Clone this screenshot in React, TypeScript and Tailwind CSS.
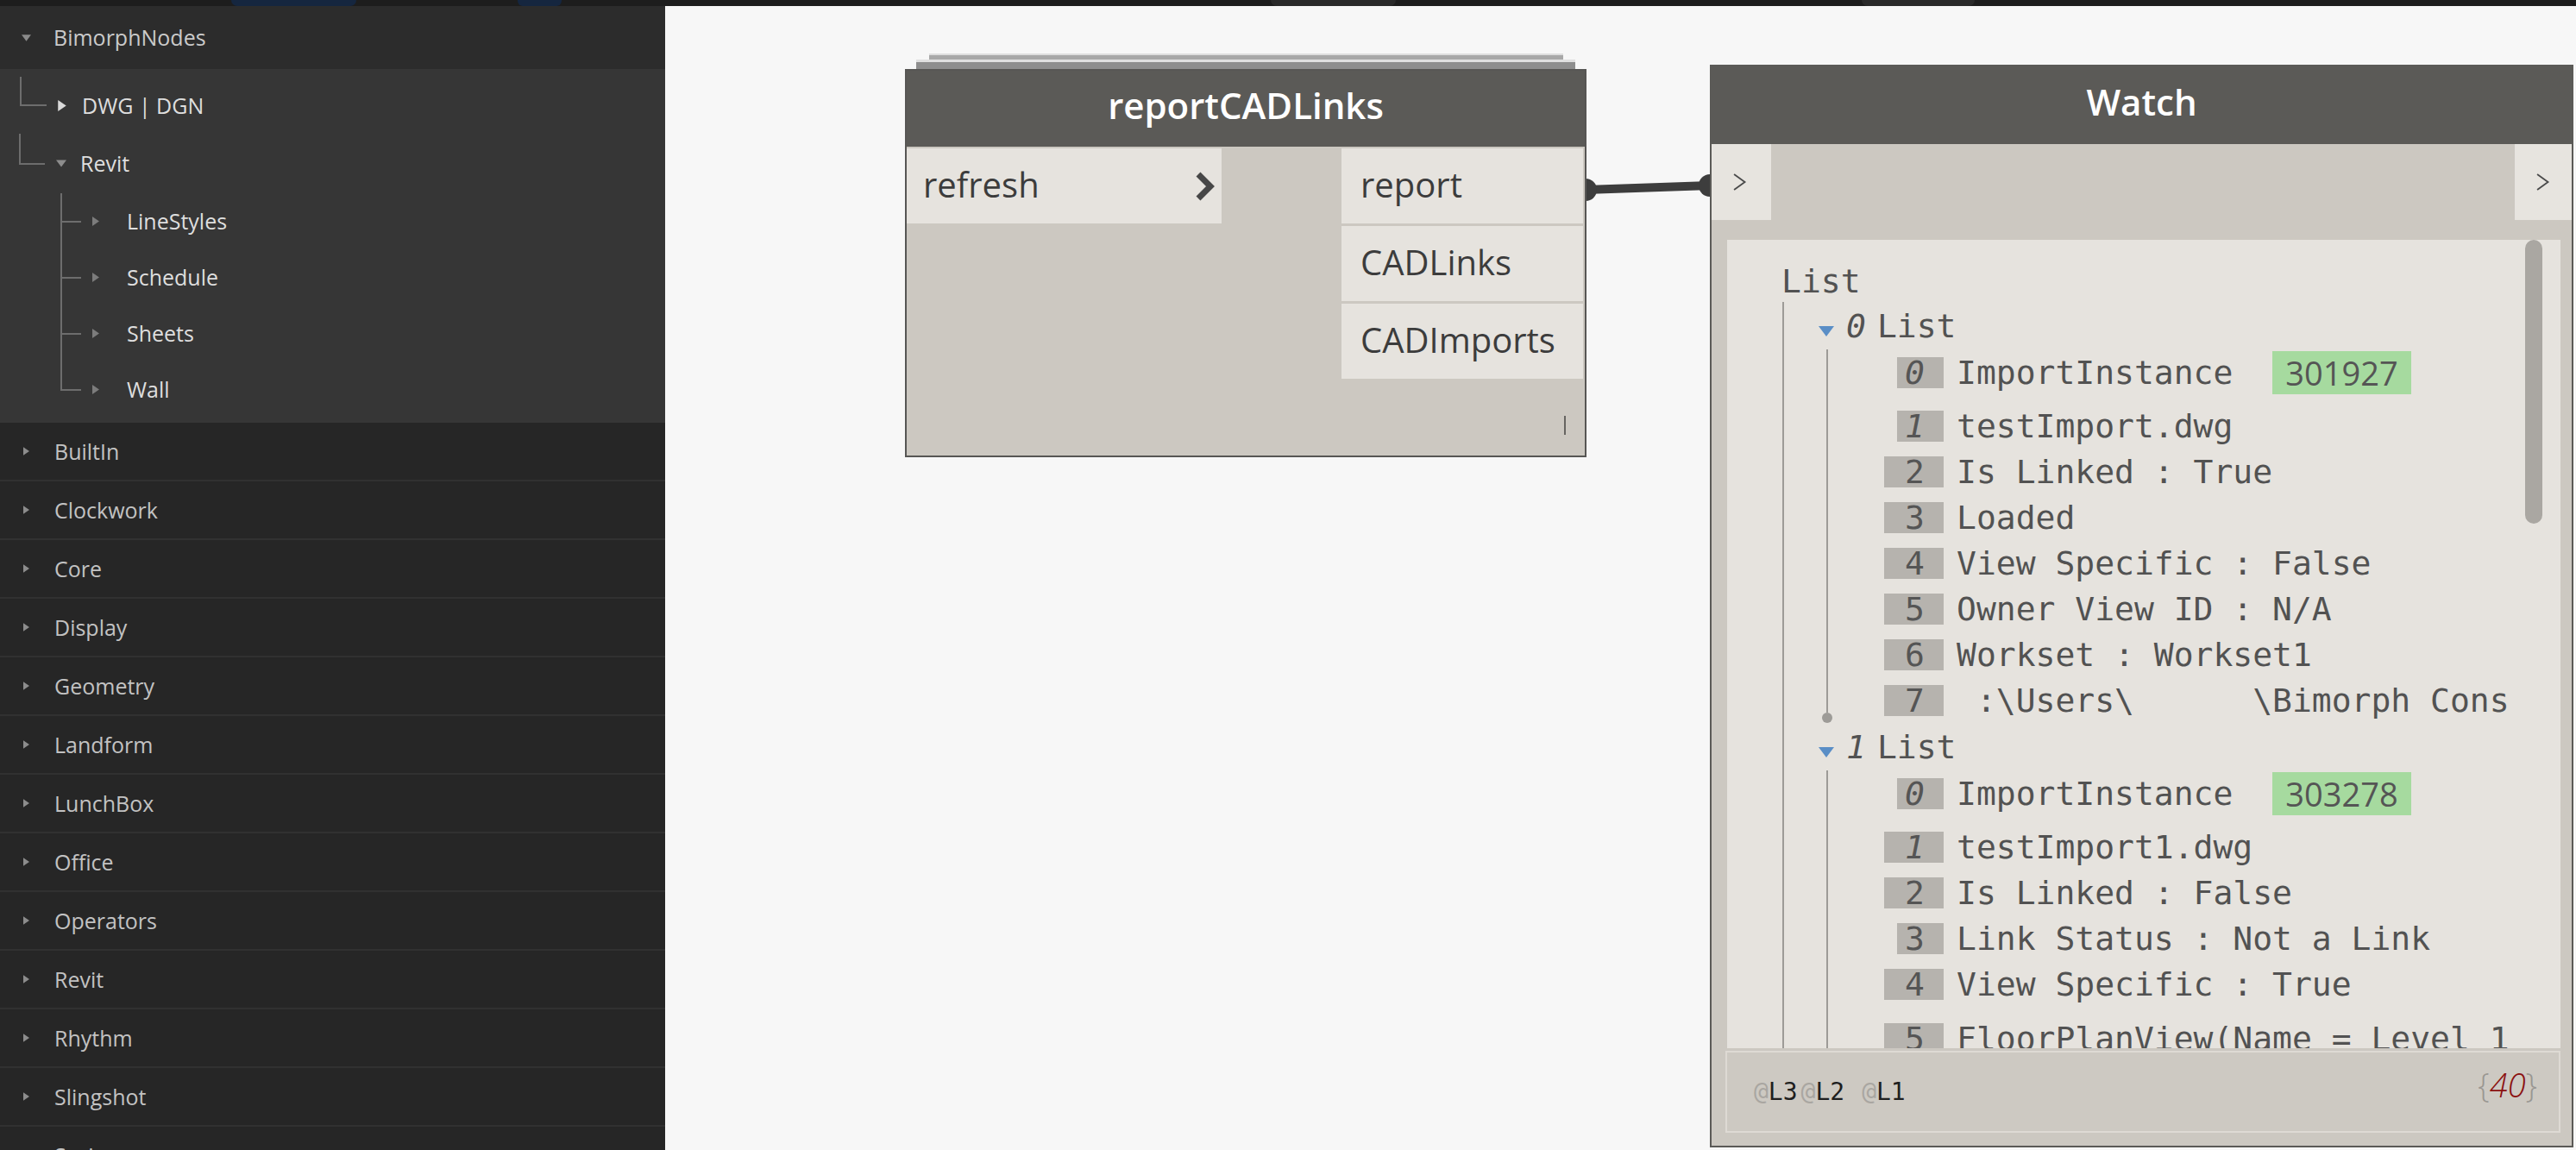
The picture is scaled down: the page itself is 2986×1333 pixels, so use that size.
import type { ReactNode } from "react";

const SANS = "font-['Open_Sans',sans-serif]";
const MONO = "font-['DejaVu_Sans_Mono',monospace]";

const PACKAGES = [
  "BuiltIn",
  "Clockwork",
  "Core",
  "Display",
  "Geometry",
  "Landform",
  "LunchBox",
  "Office",
  "Operators",
  "Revit",
  "Rhythm",
  "Slingshot",
  "Springs",
];

type Row = { i: number; text: string; id?: string; wide?: boolean; gapTop?: boolean };

const LIST_0: Row[] = [
  { i: 0, text: "ImportInstance", id: "301927" },
  { i: 1, text: "testImport.dwg" },
  { i: 2, text: "Is Linked : True", wide: true },
  { i: 3, text: "Loaded", wide: true },
  { i: 4, text: "View Specific : False", wide: true },
  { i: 5, text: "Owner View ID : N/A", wide: true },
  { i: 6, text: "Workset : Workset1", wide: true },
  { i: 7, text: " :\\Users\\      \\Bimorph Cons", wide: true },
];

const LIST_1: Row[] = [
  { i: 0, text: "ImportInstance", id: "303278" },
  { i: 1, text: "testImport1.dwg", wide: true },
  { i: 2, text: "Is Linked : False", wide: true },
  { i: 3, text: "Link Status : Not a Link" },
  { i: 4, text: "View Specific : True", wide: true },
  { i: 5, text: "FloorPlanView(Name = Level 1", wide: true, gapTop: true },
  { i: 6, text: "Workset : Workset1", wide: true },
];

function TriRight({ className }: { className?: string }) {
  return (
    <svg viewBox="0 0 8 11" className={className}>
      <path d="M0 0L8 5.5L0 11Z" fill="currentColor" />
    </svg>
  );
}

function TriDown({ className }: { className?: string }) {
  return (
    <svg viewBox="0 0 12 8" className={className}>
      <path d="M0 0H12L6 8Z" fill="currentColor" />
    </svg>
  );
}

function Chevron({ className, bold }: { className?: string; bold?: boolean }) {
  return (
    <svg viewBox="0 0 26 36" className={className}>
      <polyline
        points={bold ? "5,4 19,18 5,32" : "3,5 21,18 3,31"}
        fill="none"
        stroke={bold ? "#474747" : "#4a4a4a"}
        strokeWidth={bold ? 7 : 2.6}
      />
    </svg>
  );
}

// L / T shaped tree connector, tick sits at the row's vertical centre
function Elbow({ className, through }: { className: string; through?: boolean }) {
  return (
    <div className={`flex h-full shrink-0 flex-col ${className}`}>
      <div className="flex-1 border-b-2 border-l-2 border-[#6d6d6d]" />
      <div className={through ? "flex-1 border-l-2 border-[#6d6d6d]" : "flex-1"} />
    </div>
  );
}

function Sidebar() {
  return (
    <aside className={`flex w-[771px] shrink-0 flex-col overflow-hidden bg-[#262626] ${SANS} text-[25px] leading-none`}>
      <div className="flex h-[73px] shrink-0 items-center bg-[#2c2c2c]">
        <TriDown className="ml-[25px] h-[8px] w-[11px] text-[#8a8a8a]" />
        <span className="ml-[26px] text-[#cacaca]">BimorphNodes</span>
      </div>

      <div className="flex h-[410px] shrink-0 flex-col bg-[#363636] pt-[9px] text-[#dedede]">
        <div className="flex h-[66px] items-center">
          <Elbow className="ml-[23px] w-[31px]" />
          <TriRight className="ml-[13px] h-[13px] w-[10px] text-[#dadada]" />
          <span className="ml-[18px]">DWG | DGN</span>
        </div>
        <div className="flex h-[69px] items-center">
          <Elbow className="ml-[22px] w-[30px]" />
          <TriDown className="ml-[13px] h-[9px] w-[12px] text-[#8d8d8d]" />
          <span className="ml-[16px]">Revit</span>
        </div>
        {["LineStyles", "Schedule", "Sheets", "Wall"].map((name, idx, arr) => (
          <div key={name} className="flex h-[65px] items-center">
            <Elbow className="ml-[70px] w-[24px]" through={idx < arr.length - 1} />
            <TriRight className="ml-[13px] h-[11px] w-[8px] text-[#7c7c7c]" />
            <span className="ml-[32px]">{name}</span>
          </div>
        ))}
      </div>

      {PACKAGES.map((name) => (
        <div
          key={name}
          className="flex h-[68px] shrink-0 items-center border-b-2 border-[#313131] bg-[#262626]"
        >
          <TriRight className="ml-[27px] h-[10px] w-[7px] text-[#8c8c8c]" />
          <span className="ml-[29px] text-[#c2c2c2]">{name}</span>
        </div>
      ))}
    </aside>
  );
}

function ReportNode() {
  return (
    <div className={`absolute left-[278px] top-[55px] flex w-[790px] flex-col items-center ${SANS} leading-none`}>
      <div className="h-[7px] w-[735px] border-t-2 border-[#dedede] bg-[#a8a8a8]" />
      <div className="h-[11px] w-[764px] border-t-[3px] border-[#e0e0e0] bg-[#8e8e8e]" />
      <div className="flex h-[450px] w-full flex-col border-2 border-[#575654] bg-[#ccc8c1]">
        <div className="flex h-[88px] shrink-0 items-center justify-center bg-[#5b5a57] pb-[8px] text-[42px] font-semibold text-white">
          reportCADLinks
        </div>
        <div className="flex flex-1 flex-col pt-[2px] text-[40px] text-[#3c3c3c]">
          <div className="flex items-start justify-between">
            <div className="flex h-[87px] w-[365px] items-center justify-between bg-[#e6e3de] pl-[19px] pr-[6px]">
              <span className="pb-[4px]">refresh</span>
              <Chevron bold className="h-[36px] w-[26px]" />
            </div>
            <div className="mr-[2px] flex w-[280px] flex-col gap-[3px]">
              {["report", "CADLinks", "CADImports"].map((p) => (
                <div key={p} className="flex h-[87px] items-center bg-[#e6e3de] pb-[4px] pl-[22px]">
                  {p}
                </div>
              ))}
            </div>
          </div>
          <div className="flex-1" />
          <div className="flex justify-end pb-[24px] pr-[22px]">
            <div className="h-[22px] w-[2px] bg-[#666461]" />
          </div>
        </div>
      </div>
    </div>
  );
}

function IndexBox({ i, wide }: { i: number; wide?: boolean }) {
  return (
    <div className="flex w-[129px] shrink-0 justify-end">
      <div
        className={`flex h-[36px] items-center bg-[#b6b3ae] text-[#555] ${wide ? "w-[69px] pl-[24px]" : "w-[54px] pl-[9px]"} ${i < 2 ? "italic" : ""}`}
      >
        {i}
      </div>
    </div>
  );
}

function WatchRow({ row }: { row: Row }) {
  return (
    <div
      className={`flex shrink-0 items-center ${row.id ? "h-[62px] pb-[9px]" : "h-[53px]"} ${row.gapTop ? "mt-[10px]" : ""}`}
    >
      <IndexBox i={row.i} wide={row.wide} />
      <span className="ml-[15px] whitespace-pre">{row.text}</span>
      {row.id ? (
        <span className={`ml-[46px] flex h-[50px] items-center bg-[#a6da9f] px-[15px] ${SANS} text-[38px] text-[#555]`}>
          {row.id}
        </span>
      ) : null}
    </div>
  );
}

function SubList({ idx, rows, dot }: { idx: number; rows: Row[]; dot?: boolean }) {
  return (
    <div className="flex flex-col">
      <div className="flex h-[55px] shrink-0 items-center">
        <TriDown className="ml-[39px] mt-[12px] h-[12px] w-[20px] text-[#5a8ec6]" />
        <span className="ml-[13px] italic">{idx}</span>
        <span className="ml-[13px]">List</span>
      </div>
      <div className="flex">
        <div className="ml-[44px] flex w-[12px] shrink-0 flex-col items-center">
          <div className="w-[2px] flex-1 bg-[#9d9b97]" />
          {dot ? <div className="h-[12px] w-[12px] rounded-full bg-[#9d9b97]" /> : null}
        </div>
        <div className="flex flex-col">
          {rows.map((r) => (
            <WatchRow key={r.i} row={r} />
          ))}
        </div>
      </div>
    </div>
  );
}

function Footer({ children }: { children: ReactNode }) {
  return (
    <div className="ml-[16px] mr-[13px] mt-[3px] flex h-[95px] shrink-0 items-center justify-between border-2 border-[#dedad4] bg-[#cdc9c2] pl-[31px] pr-[25px]">
      {children}
    </div>
  );
}

function WatchNode() {
  return (
    <div className="absolute left-[1211px] top-[68px] flex h-[1255px] w-[1001px] flex-col border-2 border-[#5b5a57] bg-[#ccc8c1] leading-none">
      <div className={`flex h-[90px] shrink-0 items-center justify-center bg-[#5b5a57] pb-[8px] ${SANS} text-[42px] font-semibold text-white`}>
        Watch
      </div>
      <div className="flex h-[88px] shrink-0 justify-between">
        <div className="flex w-[69px] items-center bg-[#e7e4df] pl-[24px]">
          <Chevron className="h-[26px] w-[18px]" />
        </div>
        <div className="flex w-[66px] items-center bg-[#e7e4df] pl-[24px]">
          <Chevron className="h-[26px] w-[18px]" />
        </div>
      </div>

      <div className={`relative ml-[18px] mr-[13px] mt-[23px] h-[937px] shrink-0 overflow-hidden bg-[#e6e3de] ${MONO} text-[38px] text-[#525252]`}>
        <div className="pt-[24px]">
          <div className="flex h-[48px] items-center pl-[63px]">List</div>
          <div className="ml-[64px] border-l-2 border-[#9d9b97]">
            <SubList idx={0} rows={LIST_0} dot />
            <SubList idx={1} rows={LIST_1} />
          </div>
        </div>
        <div className="absolute right-[21px] top-0 h-[329px] w-[20px] rounded-full bg-[#aaa7a2]" />
      </div>

      <Footer>
        <div className={`${MONO} text-[28px] text-[#1f1f1f]`}>
          <span className="text-[#a9a6a1]">@</span>L3
          <span className="ml-[4px] text-[#a9a6a1]">@</span>L2
          <span className="ml-[20px] text-[#a9a6a1]">@</span>L1
        </div>
        <div className={`mb-[18px] ${SANS} text-[38px] font-light text-[#9a9792]`}>
          {"{"}
          <span className="italic text-[#8b1010]">40</span>
          {"}"}
        </div>
      </Footer>
    </div>
  );
}

function Wire() {
  return (
    <svg className="absolute left-[1050px] top-[190px]" width="180" height="40" viewBox="0 0 180 40">
      <line x1="17" y1="23" x2="161" y2="18" stroke="#3d3d3d" strokeWidth="10" />
      <circle cx="17" cy="23" r="13" fill="#3d3d3d" />
      <circle cx="161" cy="18" r="13" fill="#3d3d3d" />
    </svg>
  );
}

function TopStrip() {
  return (
    <div className="flex h-[7px] shrink-0 bg-[#1d1d1d]">
      <div className="ml-[268px] w-[145px] rounded-b-full bg-[#15263f]" />
      <div className="ml-[187px] w-[51px] rounded-b-[6px] bg-[#15263f]" />
      <div className="ml-[822px] w-[145px] rounded-b-full bg-[#2a2a2a]" />
      <div className="ml-[540px] w-[131px] rounded-b-full bg-[#2a2a2a]" />
    </div>
  );
}

export default function App() {
  return (
    <div className="flex h-[1333px] w-[2986px] flex-col overflow-hidden bg-[#f7f7f7]">
      <TopStrip />
      <div className="flex min-h-0 flex-1">
        <Sidebar />
        <main className="relative flex-1 bg-[#f7f7f7]">
          <Wire />
          <ReportNode />
          <WatchNode />
        </main>
      </div>
    </div>
  );
}
